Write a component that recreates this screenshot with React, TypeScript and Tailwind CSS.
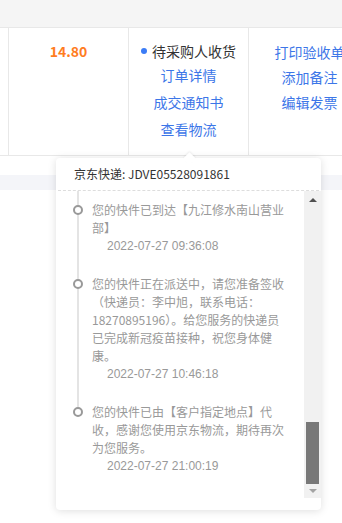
import React from 'react';

const font = { fontFamily: '"Noto Sans CJK SC", "Noto Sans", sans-serif' };

type Track = { lines: string[]; time: string };

const tracks: Track[] = [
  { lines: ['您的快件已到达【九江修水南山营业', '部】'], time: '2022-07-27 09:36:08' },
  {
    lines: [
      '您的快件正在派送中，请您准备签收',
      '（快递员：李中旭，联系电话：',
      '18270895196）。给您服务的快递员',
      '已完成新冠疫苗接种，祝您身体健',
      '康。',
    ],
    time: '2022-07-27 10:46:18',
  },
  {
    lines: ['您的快件已由【客户指定地点】代', '收，感谢您使用京东物流，期待再次', '为您服务。'],
    time: '2022-07-27 21:00:19',
  },
];

const App: React.FC = () => {
  return (
    <div className="relative w-[342px] h-[523px] overflow-hidden bg-white" style={font}>
      <div className="h-[28px] bg-[#f5f5f5] border-b border-[#e8e8e8]" />

      <div className="flex h-[128px] border-b border-[#e8e8e8] text-[14px]">
        <div className="w-[8px] shrink-0" />
        <div className="w-[120px] shrink-0 border-l border-[#e8e8e8] pt-[13px] text-center leading-[20px] font-bold text-[#ff7d1f]">
          14.80
        </div>
        <div className="w-[120px] shrink-0 border-l border-[#e8e8e8] pt-[13px] flex flex-col items-center">
          <div className="flex items-center leading-[20px] text-[#333]">
            <span className="w-[6px] h-[6px] rounded-full bg-[#3b7cf6] mr-[5px]" />
            待采购人收货
          </div>
          <div className="flex flex-col items-center pt-[1px] leading-[27px] text-[#3c76e8]">
            <span>订单详情</span>
            <span>成交通知书</span>
            <span>查看物流</span>
          </div>
        </div>
        <div className="w-[122px] shrink-0 border-l border-[#e8e8e8] pt-[12px] flex flex-col items-center leading-[25px] text-[#3c76e8] whitespace-nowrap">
          <span>打印验收单</span>
          <span>添加备注</span>
          <span>编辑发票</span>
        </div>
      </div>

      <div className="h-[19px]" />
      <div className="h-[15px] bg-[#f4f5f9]" />

      <div className="absolute left-[56px] top-[158px] w-[265px] h-[352px] bg-white rounded-[4px] shadow-[0_1px_8px_rgba(0,0,0,0.13)] flex flex-col">
        <div className="absolute left-[129px] -top-[4px] w-[9px] h-[9px] bg-white rotate-45 shadow-[-1px_-1px_2px_rgba(0,0,0,0.06)]" />
        <div className="relative h-[33px] shrink-0 flex items-center pl-[16px] mx-[2px] border-b border-dashed border-[#dddddd] text-[12px] text-[#333]">
          京东快递: JDVE05528091861
        </div>

        <div className="flex h-[307px] shrink-0">
          <div className="relative flex-1 pt-[10px] overflow-hidden">
            <div className="absolute left-[21px] top-0 w-[2px] h-[221px] bg-[#e4e4e4]" />
            <div className="flex flex-col gap-[20px]">
              {tracks.map((t, i) => (
                <div key={i} className="relative pl-[36px] text-[12px] leading-[18px] text-[#999]">
                  <span className="absolute left-[17px] top-[4px] w-[10px] h-[10px] rounded-full border-2 border-[#999] bg-white" />
                  {t.lines.map((l, j) => (
                    <div key={j} className="whitespace-nowrap">{l}</div>
                  ))}
                  <div className="pl-[15px]" style={{ fontFamily: '"Liberation Sans", Arial, sans-serif' }}>
                    {t.time}
                  </div>
                </div>
              ))}
            </div>
          </div>

          <div className="w-[17px] shrink-0 bg-[#f1f1f1] flex flex-col items-center">
            <div className="h-[18px] flex items-center justify-center">
              <div className="w-0 h-0 border-x-[4px] border-x-transparent border-b-[4px] border-b-[#505050]" />
            </div>
            <div className="flex-1" />
            <div className="w-[13px] h-[62px] bg-[#787878]" />
            <div className="h-[14px] flex items-center justify-center">
              <div className="w-0 h-0 border-x-[4px] border-x-transparent border-t-[4px] border-t-[#a3a3a3]" />
            </div>
          </div>
        </div>
      </div>
    </div>
  );
};

export default App;
